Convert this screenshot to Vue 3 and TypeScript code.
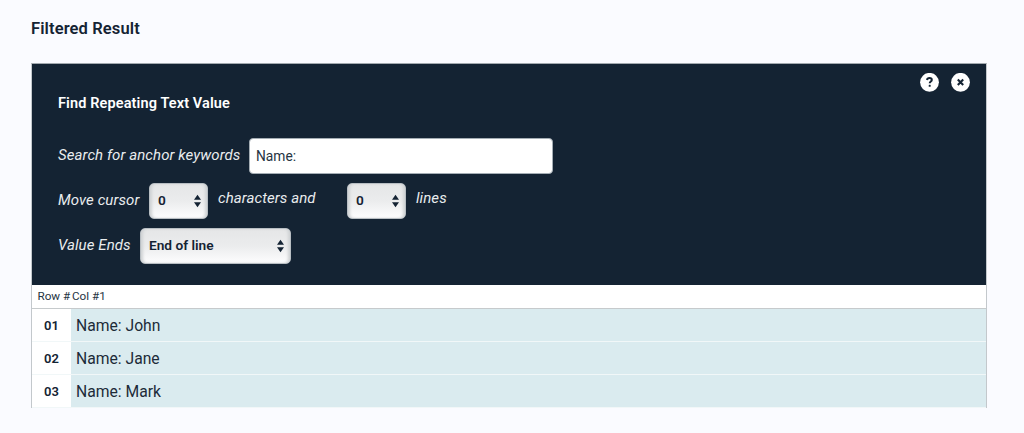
<script setup lang="ts">
import { ref } from 'vue'

interface Row {
  id: string
  value: string
}

const keyword = ref('Name:')
const rows: Row[] = [
  { id: '01', value: 'Name: John' },
  { id: '02', value: 'Name: Jane' },
  { id: '03', value: 'Name: Mark' },
]
</script>

<template>
  <main class="page">
    <h1 class="title">Filtered Result</h1>
    <section class="card">
      <div class="panel">
        <div class="actions">
          <button class="round" aria-label="Help">
            <svg width="19" height="19" viewBox="0 0 19 19">
              <circle cx="9.5" cy="9.3" r="9.4" fill="#fff" />
              <path d="M7 7C7.2 5.7 8.2 5.1 9.5 5.1c1.4 0 2.3.7 2.3 1.8 0 1.6-2.1 1.6-2.1 3.4" fill="none" stroke="#142333" stroke-width="2" />
              <rect x="8.7" y="11.8" width="2" height="2" rx=".6" fill="#142333" />
            </svg>
          </button>
          <button class="round" aria-label="Close">
            <svg width="19" height="19" viewBox="0 0 19 19">
              <circle cx="9.5" cy="9.3" r="9.4" fill="#fff" />
              <path d="M6.8 6.6l5.4 5.4M12.2 6.6l-5.4 5.4" stroke="#142333" stroke-width="2.1" />
            </svg>
          </button>
        </div>
        <h2 class="heading">Find Repeating Text Value</h2>
        <div class="line">
          <label class="l-search">Search for anchor keywords</label>
          <input v-model="keyword" class="field" type="text" />
        </div>
        <div class="line">
          <label class="l-move">Move cursor</label>
          <button class="select small">
            <span>0</span>
            <svg width="7" height="14" viewBox="0 0 7 14"><path d="M0 5.8L3.5.8 7 5.8zM0 8.2h7l-3.5 5z" fill="#142333" /></svg>
          </button>
          <span class="raised l-chars">characters and</span>
          <button class="select small">
            <span>0</span>
            <svg width="7" height="14" viewBox="0 0 7 14"><path d="M0 5.8L3.5.8 7 5.8zM0 8.2h7l-3.5 5z" fill="#142333" /></svg>
          </button>
          <span class="raised">lines</span>
        </div>
        <div class="line">
          <label class="l-ends">Value Ends</label>
          <button class="select wide">
            <span>End of line</span>
            <svg width="7" height="14" viewBox="0 0 7 14"><path d="M0 5.8L3.5.8 7 5.8zM0 8.2h7l-3.5 5z" fill="#142333" /></svg>
          </button>
        </div>
      </div>
      <div class="head"><span class="h-row">Row #</span><span>Col #1</span></div>
      <div v-for="row in rows" :key="row.id" class="row">
        <div class="num">{{ row.id }}</div>
        <div class="value">{{ row.value }}</div>
      </div>
    </section>
  </main>
</template>

<style>
body {
  background: #fafbff;
}
</style>

<style scoped>
* {
  box-sizing: border-box;
}
.page {
  height: 433px;
  padding: 17px 37px 0 31px;
  background: #fafbff;
  color: #142333;
  font-family: Roboto, sans-serif;
  overflow: hidden;
}
.title {
  margin: 0 0 22px;
  height: 24px;
  font-size: 16.5px;
  line-height: 24px;
  font-weight: 600;
  letter-spacing: 0.12px;
}
.card {
  width: 956px;
  height: 345px;
  border: 1px solid #c3c8cc;
  border-top-color: #a2a9af;
  border-bottom: 0;
  background: #fff;
}
.panel {
  height: 221px;
  padding: 9px 16px 0 26px;
  background: #142333;
  color: #fff;
}
.actions {
  display: flex;
  justify-content: flex-end;
  gap: 12px;
  height: 19px;
}
.round {
  width: 19px;
  height: 19px;
  padding: 0;
  border: 0;
  background: none;
}
.round svg {
  display: block;
}
.heading {
  margin: 0;
  height: 41px;
  padding-top: 2px;
  font-size: 14.5px;
  line-height: 20px;
  font-weight: 600;
  letter-spacing: 0.12px;
}
.line {
  display: flex;
  align-items: center;
  height: 45px;
  color: #e9ecee;
  font-size: 15px;
  font-style: italic;
  font-weight: 400;
  letter-spacing: 0.08px;
  white-space: nowrap;
}
.line label {
  flex: none;
  padding-bottom: 1px;
}
.l-search {
  width: 191px;
}
.l-move {
  width: 91px;
}
.l-ends {
  width: 82px;
}
.field {
  width: 304px;
  height: 36px;
  padding: 1px 6px 0;
  border: 1px solid #a4adb4;
  border-radius: 4px;
  background: #fff;
  color: #263443;
  font: 13.8px Roboto, sans-serif;
  outline: none;
}
.select {
  display: flex;
  align-items: center;
  justify-content: space-between;
  height: 36px;
  padding: 0 6px 1px 8px;
  border: 1px solid #b8bec3;
  border-radius: 5px;
  background: linear-gradient(#e5e6e7, #ebeced 50%, #fdfdfe);
  box-shadow: inset 3px 0 3px -1px #cfd2d4, inset -3px 0 3px -1px #cfd2d4;
  color: #142333;
  font: 600 13.7px Roboto, sans-serif;
}
.select svg {
  position: relative;
  top: 1px;
}
.small {
  width: 59px;
}
.wide {
  width: 151px;
}
.raised {
  margin: -5px 0 0 10px;
}
.l-chars {
  width: 129px;
}
.head {
  display: flex;
  height: 24px;
  padding-left: 5.5px;
  border-bottom: 1px solid #c6cacc;
  color: #263443;
  font-size: 11.7px;
  line-height: 22px;
}
.h-row {
  width: 34.5px;
}
.row {
  display: flex;
  height: 33px;
  border-bottom: 1px solid #f1f7f8;
}
.num {
  width: 39px;
  font-size: 13px;
  font-weight: 650;
  line-height: 34px;
  text-align: center;
}
.value {
  flex: 1;
  padding-left: 5px;
  background: #daebef;
  color: #1d2b39;
  font-size: 15.7px;
  font-weight: 400;
  line-height: 34px;
}
</style>
